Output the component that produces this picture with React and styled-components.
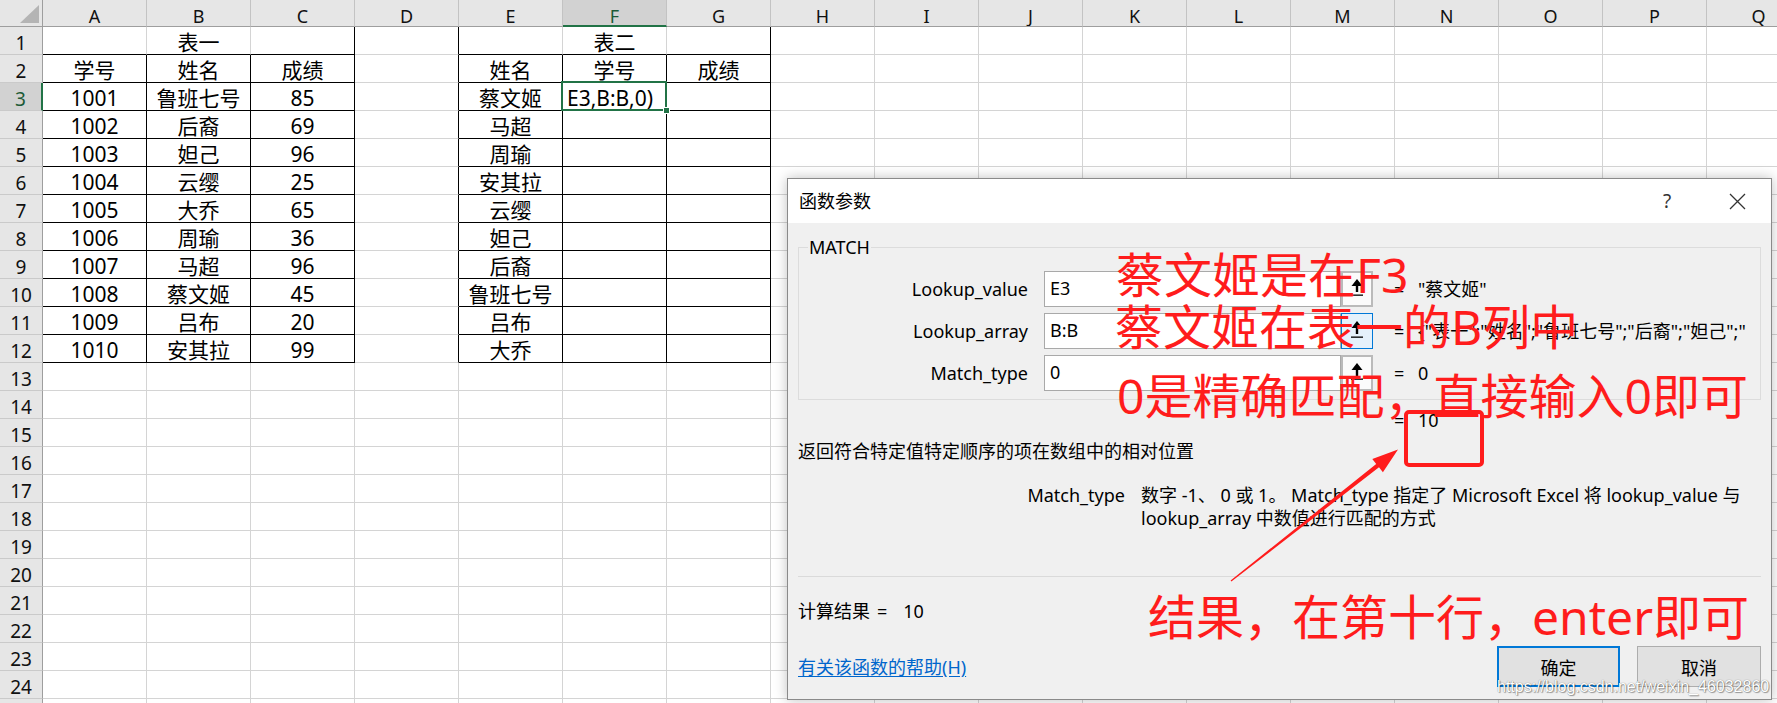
import React from "react";
import styled, { createGlobalStyle, css } from "styled-components";

// Fonts
const UI_FONT = `"Noto Sans", "Noto Sans CJK SC", sans-serif`;

// Sheet data
// __________________________________________________________________________________________

const COLUMNS = "ABCDEFGHIJKLMNOPQ".split("");
const ROW_COUNT = 25;

const TABLE_ONE = [
  ["1001", "鲁班七号", "85"],
  ["1002", "后裔", "69"],
  ["1003", "妲己", "96"],
  ["1004", "云缨", "25"],
  ["1005", "大乔", "65"],
  ["1006", "周瑜", "36"],
  ["1007", "马超", "96"],
  ["1008", "蔡文姬", "45"],
  ["1009", "吕布", "20"],
  ["1010", "安其拉", "99"],
];

const TABLE_TWO = ["蔡文姬", "马超", "周瑜", "安其拉", "云缨", "妲己", "后裔", "鲁班七号", "吕布", "大乔"];

const HEADINGS = ["学号", "姓名", "成绩", "", "姓名", "学号", "成绩"];

const getValue = (row, col) => {
  if (row === 1) return col === 1 ? "表一" : col === 5 ? "表二" : "";
  if (row === 2) return HEADINGS[col] || "";
  if (row >= 3 && row <= 12) {
    if (col <= 2) return TABLE_ONE[row - 3][col];
    if (col === 4) return TABLE_TWO[row - 3];
    if (col === 5 && row === 3) return "E3,B:B,0)";
  }
  return "";
};

const inTable = (row, col) => row >= 1 && row <= 12 && (col <= 2 || (col >= 4 && col <= 6));

const hasRightRule = (row, col) => {
  if (row < 1 || row > 12) return false;
  if (col === 2 || col === 3 || col === 6) return true;
  return row >= 2 && inTable(row, col);
};

const ARGS = [
  { name: "Lookup_value", input: "E3", value: "\"蔡文姬\"" },
  { name: "Lookup_array", input: "B:B", value: "{\"表一\";\"姓名\";\"鲁班七号\";\"后裔\";\"妲己\";\"", focused: true },
  { name: "Match_type", input: "0", value: "0" },
];

const NOTES = [
  { x: 1116, y: 251, text: "蔡文姬是在F3" },
  { x: 1115, y: 303, text: "蔡文姬在表一的B列中" },
  { x: 1117, y: 372, text: "0是精确匹配，直接输入0即可" },
  { x: 1148, y: 593, text: "结果，在第十行，enter即可" },
];

// Global
// __________________________________________________________________________________________

const GlobalStyle = createGlobalStyle`
  html, body {
    margin: 0;
    padding: 0;
    background: #fff;
  }
  body {
    width: 1777px;
    height: 703px;
    overflow: hidden;
    font-family: ${UI_FONT};
  }
`;

const Page = styled.div`
  position: relative;
  width: 1777px;
  height: 703px;
  overflow: hidden;
  background: #fff;
`;

// Spreadsheet
// __________________________________________________________________________________________

const Sheet = styled.div`
  display: grid;
  grid-template-columns: 43px repeat(17, 104px);
  grid-template-rows: 27px;
  grid-auto-rows: 28px;
  color: #000;
  font-family: ${UI_FONT};
`;

const Corner = styled.div`
  box-sizing: border-box;
  background: #e6e6e6;
  border-right: 1px solid #9e9e9e;
  border-bottom: 1px solid #9e9e9e;
  display: flex;
  align-items: flex-end;
  justify-content: flex-end;
  padding: 0 3px 3px 0;
`;

const SelectAll = styled.span`
  width: 19px;
  height: 18px;
  background: #b4b4b4;
  clip-path: polygon(100% 0, 100% 100%, 0 100%);
`;

const ColHead = styled.div`
  box-sizing: border-box;
  background: ${({ $active }) => ($active ? "#d2d2d2" : "#e6e6e6")};
  border-right: 1px solid #c3c3c3;
  border-bottom: ${({ $active }) => ($active ? "2px solid #217346" : "1px solid #9e9e9e")};
  color: ${({ $active }) => ($active ? "#1c5a37" : "#111")};
  font-size: 18px;
  line-height: 22px;
  padding-top: 5px;
  text-align: center;
  overflow: hidden;
`;

const RowHead = styled.div`
  box-sizing: border-box;
  background: ${({ $active }) => ($active ? "#d2d2d2" : "#e6e6e6")};
  border-right: ${({ $active }) => ($active ? "2px solid #217346" : "1px solid #9e9e9e")};
  border-bottom: 1px solid #cacaca;
  color: ${({ $active }) => ($active ? "#1c5a37" : "#111")};
  font-size: 19px;
  line-height: 22px;
  padding-top: 5px;
  text-align: center;
`;

const Cell = styled.div`
  position: relative;
  box-sizing: border-box;
  border-right: 1px solid ${({ $rightRule }) => ($rightRule ? "#000" : "#d4d4d4")};
  border-bottom: 1px solid ${({ $bottomRule }) => ($bottomRule ? "#000" : "#d4d4d4")};
  font-size: 21px;
  line-height: 23px;
  padding-top: 4px;
  text-align: center;
  white-space: nowrap;

  ${({ $selected }) =>
    $selected &&
    css`
      z-index: 1;
      text-align: left;
      padding-left: 4px;

      &::before {
        content: "";
        position: absolute;
        inset: -2px -1px -1px -2px;
        border: 2px solid #217346;
      }

      &::after {
        content: "";
        position: absolute;
        right: -4px;
        bottom: -4px;
        width: 5px;
        height: 5px;
        background: #217346;
        border: 1px solid #fff;
      }
    `}
`;

// Dialog
// __________________________________________________________________________________________

const Dialog = styled.section`
  position: absolute;
  left: 787px;
  top: 178px;
  width: 985px;
  height: 522px;
  box-sizing: border-box;
  border: 1px solid #8a8a8a;
  background: #f0f0f0;
  box-shadow: 0 0 12px rgba(0, 0, 0, 0.25);
  display: flex;
  flex-direction: column;
  font-family: ${UI_FONT};
  font-size: 18px;
  color: #000;
  z-index: 2;
`;

const TitleBar = styled.header`
  height: 44px;
  flex-shrink: 0;
  background: #fff;
  display: flex;
  align-items: center;
  padding: 0 20px 0 11px;
`;

const DialogTitle = styled.h1`
  flex: 1;
  margin: 0;
  font-size: 18px;
  font-weight: 400;
  line-height: 22px;
`;

const HelpMark = styled.span`
  width: 28px;
  text-align: center;
  color: #333;
  font-size: 19px;
  line-height: 22px;
`;

const CloseButton = styled.span`
  width: 28px;
  height: 28px;
  margin-left: 42px;
  display: flex;
  align-items: center;
  justify-content: center;
`;

const DialogBody = styled.div`
  flex: 1;
  display: flex;
  flex-direction: column;
  padding: 0 10px;
`;

const GroupBox = styled.div`
  position: relative;
  margin-top: 24px;
  border: 1px solid #dcdcdc;
  padding: 23px 0 8px;
  display: flex;
  flex-direction: column;
  gap: 6px;
`;

const GroupLegend = styled.span`
  position: absolute;
  top: -12px;
  left: 9px;
  padding: 0 1px;
  background: #f0f0f0;
  line-height: 22px;
`;

const ArgRow = styled.div`
  display: flex;
  align-items: center;
  height: 36px;
`;

const ArgLabel = styled.span`
  width: 229px;
  flex-shrink: 0;
  margin-right: 16px;
  text-align: right;
  line-height: 22px;
`;

const ArgInput = styled.span`
  width: 297px;
  height: 36px;
  flex-shrink: 0;
  box-sizing: border-box;
  border: 1px solid #a9a9a9;
  background: #fff;
  padding: 0 0 3px 5px;
  display: flex;
  align-items: center;
  line-height: 22px;
`;

const RefButton = styled.span`
  width: 32px;
  height: 36px;
  flex-shrink: 0;
  box-sizing: border-box;
  margin-right: 21px;
  border: ${({ $focused }) => ($focused ? "1px solid #0078d7" : "2px solid #bababa")};
  background: ${({ $focused }) => ($focused ? "#e5f1fb" : "#fbfbfb")};
  display: flex;
  align-items: center;
  justify-content: center;
  padding-bottom: 3px;
`;

const Equals = styled.span`
  width: 24px;
  flex-shrink: 0;
  line-height: 22px;
`;

const ArgValue = styled.span`
  flex: 1;
  min-width: 0;
  overflow: hidden;
  white-space: nowrap;
  line-height: 22px;
`;

const ResultLine = styled.div`
  display: flex;
  margin-top: 9px;
  padding-left: 596px;
  line-height: 22px;
`;

const Summary = styled.p`
  margin: 9px 0 0;
  line-height: 22px;
`;

const Detail = styled.div`
  display: flex;
  margin-top: 22px;
  line-height: 23px;
`;

const DetailLabel = styled.span`
  width: 327px;
  flex-shrink: 0;
  margin-right: 16px;
  text-align: right;
`;

const DetailText = styled.span`
  white-space: nowrap;
`;

const Separator = styled.hr`
  margin: 46px 0 0;
  border: 0;
  border-top: 1px solid #dadada;
`;

const Total = styled.div`
  margin-top: 23px;
  display: flex;
  line-height: 22px;
`;

const TotalEquals = styled.span`
  margin-left: 7px;
`;

const TotalValue = styled.span`
  margin-left: 16px;
`;

const Footer = styled.div`
  margin-top: 24px;
  display: flex;
  align-items: center;
`;

const HelpLink = styled.a`
  color: #0066cc;
  text-decoration: underline;
  text-underline-offset: 2px;
  line-height: 22px;
`;

const ButtonGroup = styled.div`
  margin-left: auto;
  display: flex;
  gap: 17px;
`;

const DialogButton = styled.button`
  width: ${({ $width }) => $width}px;
  height: 41px;
  box-sizing: border-box;
  background: #e1e1e1;
  border: ${({ $primary }) => ($primary ? "2px solid #0078d7" : "1px solid #adadad")};
  font-family: ${UI_FONT};
  font-size: 18px;
  color: #000;
  padding: 0;
`;

// Annotations
// __________________________________________________________________________________________

const Overlay = styled.div`
  position: absolute;
  inset: 0;
  pointer-events: none;
  z-index: 3;
`;

const Note = styled.div`
  position: absolute;
  left: ${({ $x }) => $x}px;
  top: ${({ $y }) => $y}px;
  font-family: ${UI_FONT};
  font-size: 48px;
  line-height: 48px;
  color: #ff1c1c;
  white-space: nowrap;
`;

const Watermark = styled.div`
  position: absolute;
  left: 1497px;
  top: 678px;
  font-family: "Liberation Sans", Arial, sans-serif;
  font-size: 16px;
  line-height: 18px;
  color: #fff;
  white-space: nowrap;
  text-shadow: 0 0 1px rgba(0, 0, 0, 0.55), 1px 1px 1px rgba(0, 0, 0, 0.35);
`;

const Marks = styled.svg`
  position: absolute;
  inset: 0;
`;

// Icons
// __________________________________________________________________________________________

const RefIcon = () => (
  <svg width="14" height="20" viewBox="0 0 14 20">
    <path d="M7 1 L1.5 8 H12.5 Z" fill="#000" />
    <rect x="5.8" y="7" width="2.4" height="7" fill="#000" />
    <rect x="1" y="16.5" width="12" height="1.3" fill="#000" />
  </svg>
);

const CloseIcon = () => (
  <svg width="17" height="17" viewBox="0 0 17 17">
    <path d="M1 1 L16 16 M16 1 L1 16" stroke="#333" strokeWidth="1.3" fill="none" />
  </svg>
);

// Begin Component
// __________________________________________________________________________________________

export default function App() {
  return (
    <Page>
      <GlobalStyle />
      <Sheet>
        <Corner>
          <SelectAll />
        </Corner>
        {COLUMNS.map((c, i) => (
          <ColHead key={c} $active={i === 5}>
            {c}
          </ColHead>
        ))}
        {Array.from({ length: ROW_COUNT }, (_, r) => {
          const row = r + 1;
          return (
            <React.Fragment key={row}>
              <RowHead $active={row === 3}>{row}</RowHead>
              {COLUMNS.map((c, col) => (
                <Cell
                  key={c}
                  $rightRule={hasRightRule(row, col)}
                  $bottomRule={inTable(row, col)}
                  $selected={row === 3 && col === 5}
                >
                  {getValue(row, col)}
                </Cell>
              ))}
            </React.Fragment>
          );
        })}
      </Sheet>

      <Dialog>
        <TitleBar>
          <DialogTitle>函数参数</DialogTitle>
          <HelpMark>?</HelpMark>
          <CloseButton>
            <CloseIcon />
          </CloseButton>
        </TitleBar>
        <DialogBody>
          <GroupBox>
            <GroupLegend>MATCH</GroupLegend>
            {ARGS.map((a) => (
              <ArgRow key={a.name}>
                <ArgLabel>{a.name}</ArgLabel>
                <ArgInput>{a.input}</ArgInput>
                <RefButton $focused={a.focused}>
                  <RefIcon />
                </RefButton>
                <Equals>=</Equals>
                <ArgValue>{a.value}</ArgValue>
              </ArgRow>
            ))}
          </GroupBox>
          <ResultLine>
            <Equals>=</Equals>
            <span>10</span>
          </ResultLine>
          <Summary>返回符合特定值特定顺序的项在数组中的相对位置</Summary>
          <Detail>
            <DetailLabel>Match_type</DetailLabel>
            <DetailText>
              数字 -1、 0 或 1。 Match_type 指定了 Microsoft Excel 将 lookup_value 与
              <br />
              lookup_array 中数值进行匹配的方式
            </DetailText>
          </Detail>
          <Separator />
          <Total>
            计算结果
            <TotalEquals>=</TotalEquals>
            <TotalValue>10</TotalValue>
          </Total>
          <Footer>
            <HelpLink>有关该函数的帮助(H)</HelpLink>
            <ButtonGroup>
              <DialogButton $primary $width={123}>确定</DialogButton>
              <DialogButton $width={124}>取消</DialogButton>
            </ButtonGroup>
          </Footer>
        </DialogBody>
      </Dialog>

      <Overlay>
        <Marks width="1777" height="703" viewBox="0 0 1777 703">
          <rect x="1406" y="412" width="76" height="53" rx="3" fill="none" stroke="#ff1c1c" strokeWidth="4" />
          <polygon
            points="1230.6,580.5 1376.2,463.9 1372.3,458.9 1398,449.5 1382.9,472.3 1379,467.3 1231.4,581.6"
            fill="#ff1c1c"
          />
        </Marks>
        {NOTES.map((n) => (
          <Note key={n.text} $x={n.x} $y={n.y}>
            {n.text}
          </Note>
        ))}
        <Watermark>https://blog.csdn.net/weixin_46032860</Watermark>
      </Overlay>
    </Page>
  );
}
